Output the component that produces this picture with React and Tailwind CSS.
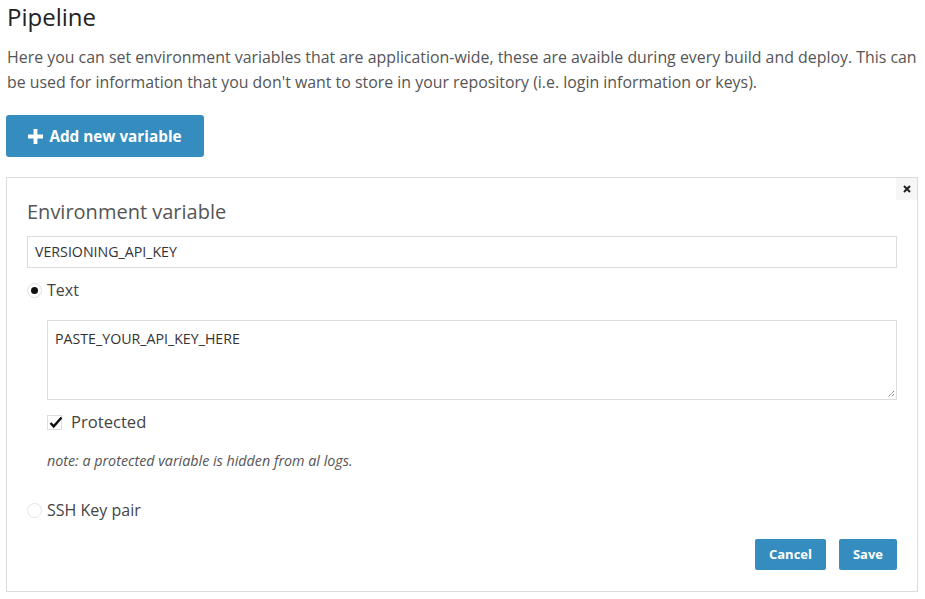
import React from "react";

export default function App() {
  return (
    <div className="w-[925px] h-[599px] bg-white text-[#444] overflow-hidden" style={{ fontFamily: '"Open Sans", sans-serif' }}>
      <div className="pl-[7px] pr-[5px]">
        <h1 className="text-[24px] leading-[34px] text-[#222] font-normal">Pipeline</h1>
        <p className="mt-[11px] text-[15.9px] leading-[25px] text-[#555]">
          Here you can set environment variables that are application-wide, these are avaible during every build and deploy. This can be used for information that you don't want to store in your repository (i.e. login information or keys).
        </p>
        <button className="mt-[20px] ml-[-1px] w-[198px] h-[42px] rounded-[3px] bg-[#358cbf] text-white font-bold text-[15.3px] flex items-center justify-center gap-[6px]">
          <svg width="15" height="15" viewBox="0 0 14 14"><path d="M5.2 0h3.6v5.2H14v3.6H8.8V14H5.2V8.8H0V5.2h5.2z" fill="white" /></svg>
          <span>Add new variable</span>
        </button>
      </div>
      <div className="relative mt-[20px] ml-[6px] w-[912px] h-[415px] border border-[#dcdcdc] pl-[20px] pr-[20px]">
        <button className="absolute right-0 top-0 w-[21px] h-[22px] bg-[#f6f6f6] flex items-center justify-center">
          <svg width="8" height="8" viewBox="0 0 8 8"><path d="M1 1l6 6M7 1L1 7" stroke="#222" strokeWidth="2" /></svg>
        </button>
        <h2 className="pt-[21px] text-[20px] leading-[26px] text-[#555]">Environment variable</h2>
        <div className="mt-[11px] h-[32px] border border-[#dcdcdc] flex items-center pl-[7px] text-[14.2px] text-[#333]">VERSIONING_API_KEY</div>
        <div className="mt-[9px] flex items-center h-[26px]">
          <span className="w-[15px] h-[15px] rounded-full border border-[#e0e0e0] flex items-center justify-center">
            <span className="w-[7px] h-[7px] rounded-full bg-[#111]" />
          </span>
          <span className="ml-[5px] text-[16px] text-[#444]">Text</span>
        </div>
        <div className="ml-[20px]">
          <div className="relative mt-[17px] h-[80px] border border-[#dcdcdc] pl-[7px] pt-[7px] text-[14.2px] text-[#333]">
            PASTE_YOUR_API_KEY_HERE
            <svg className="absolute right-[1px] bottom-[1px]" width="8" height="8" viewBox="0 0 8 8"><path d="M7 1L1 7M7 4L4 7" stroke="#555" strokeWidth="1" strokeDasharray="1 1" /></svg>
          </div>
          <div className="mt-[10px] flex items-center h-[24px]">
            <span className="relative w-[15px] h-[15px] border border-[#dedede]">
              <svg className="absolute left-[1px] top-[0px]" width="14" height="13" viewBox="0 0 14 13"><path d="M1.5 7l3.2 3.4L12.5 1.5" stroke="#111" strokeWidth="2.4" fill="none" /></svg>
            </span>
            <span className="ml-[9px] text-[16.6px] text-[#444]">Protected</span>
          </div>
          <p className="mt-[16px] text-[14.3px] italic text-[#555]">note: a protected variable is hidden from al logs.</p>
        </div>
        <div className="mt-[26px] flex items-center h-[26px]">
          <span className="w-[15px] h-[15px] rounded-full border border-[#e4e4e4]" />
          <span className="ml-[5px] text-[16px] text-[#444]">SSH Key pair</span>
        </div>
        <div className="mt-[16px] flex justify-end gap-[13px]">
          <button className="w-[71px] h-[31px] rounded-[2px] bg-[#358cbf] text-white font-bold text-[13px]">Cancel</button>
          <button className="w-[58px] h-[31px] rounded-[2px] bg-[#358cbf] text-white font-bold text-[13px]">Save</button>
        </div>
      </div>
    </div>
  );
}
